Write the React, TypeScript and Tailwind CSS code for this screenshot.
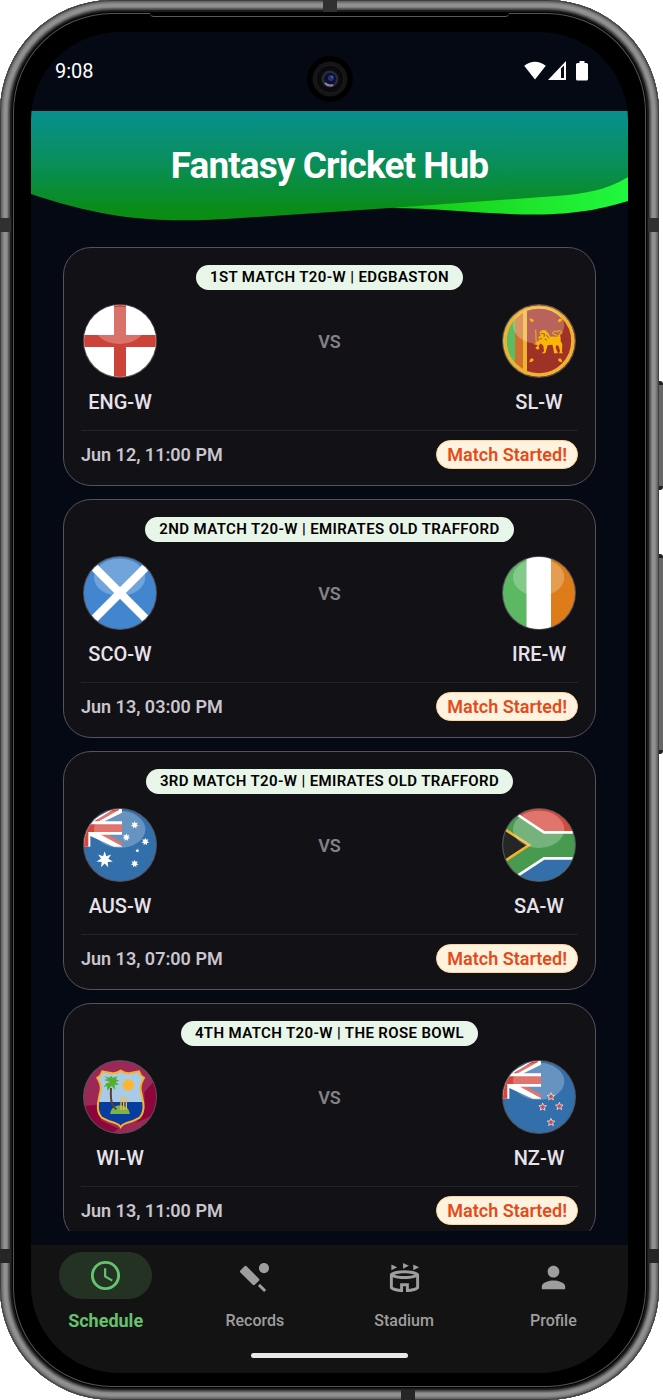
import React from "react";
import {
  MdAccessTime,
  MdOutlineStadium,
  MdPerson,
  MdSportsCricket,
} from "react-icons/md";

type Team = "ENG" | "SL" | "SCO" | "IRE" | "AUS" | "SA" | "WI" | "NZ";

interface Match {
  title: string;
  home: Team;
  away: Team;
  time: string;
}

const matches: Match[] = [
  { title: "1ST MATCH T20-W | EDGBASTON", home: "ENG", away: "SL", time: "Jun 12, 11:00 PM" },
  { title: "2ND MATCH T20-W | EMIRATES OLD TRAFFORD", home: "SCO", away: "IRE", time: "Jun 13, 03:00 PM" },
  { title: "3RD MATCH T20-W | EMIRATES OLD TRAFFORD", home: "AUS", away: "SA", time: "Jun 13, 07:00 PM" },
  { title: "4TH MATCH T20-W | THE ROSE BOWL", home: "WI", away: "NZ", time: "Jun 13, 11:00 PM" },
];

function starPoints(cx: number, cy: number, r: number, n: number, inner: number) {
  const pts: string[] = [];
  for (let i = 0; i < n * 2; i++) {
    const a = (Math.PI * i) / n - Math.PI / 2;
    const rad = i % 2 ? r * inner : r;
    pts.push(`${(cx + rad * Math.cos(a)).toFixed(1)},${(cy + rad * Math.sin(a)).toFixed(1)}`);
  }
  return pts.join(" ");
}

function UnionCanton() {
  return (
    <g>
      <path d="M0 0H117V116H0Z" fill="#336fab" />
      <path d="M16 42 92 0H117V14L60 42ZM16 78H60L117 106V116H92L22 84Z" fill="#fff" />
      <path d="M44 42 108 6V0H98L30 42ZM50 78H72L117 104V115Z" fill="#d6473c" />
      <path d="M0 40H117V80H22V116H0Z" fill="#fff" />
      <path d="M4 0H22V48H4Z" fill="#fff" />
      <path d="M0 20H16V49H117V72H16V116H0Z" fill="#d6473c" />
    </g>
  );
}

function FlagArt({ team }: { team: Team }) {
  switch (team) {
    case "ENG":
      return (
        <g>
          <path d="M0 0H222V222H0Z" fill="#fff" />
          <path d="M93 0H129V93H222V129H129V222H93V129H0V93H93Z" fill="#cc4439" />
        </g>
      );
    case "SL":
      return (
        <g>
          <path d="M0 0H222V222H0Z" fill="#a03127" />
          <path d="M0 0H39V222H0Z" fill="#5cbb63" />
          <path d="M39 0H63V222H39Z" fill="#d0702c" />
          <path d="M63 0H75V222H63Z" fill="#eeb42f" />
          <circle cx="111" cy="111" r="102" fill="none" stroke="#eeb42f" strokeWidth="11" />
        </g>
      );
    case "SCO":
      return (
        <g>
          <path d="M0 0H222V222H0Z" fill="#4186cf" />
          <path d="M32 32 190 190M190 32 32 190" stroke="#fff" strokeWidth="25" />
        </g>
      );
    case "IRE":
      return (
        <g>
          <path d="M0 0H74V222H0Z" fill="#5cb963" />
          <path d="M74 0H147V222H74Z" fill="#fff" />
          <path d="M147 0H222V222H147Z" fill="#dd7c18" />
        </g>
      );
    case "AUS":
    case "NZ":
      return (
        <g>
          <path d="M0 0H222V222H0Z" fill="#336fab" />
          <UnionCanton />
        </g>
      );
    case "SA":
      return (
        <g>
          <path d="M0 0H222V222H0Z" fill="#489a50" />
          <path d="M20 0 126 73H222V0Z" fill="#d6473c" />
          <path d="M20 222 126 151H222V222Z" fill="#336fab" />
          <path d="M30 9 126 73H222M30 214 126 151H222" fill="none" stroke="#fff" strokeWidth="8" />
          <path d="M-2 57 81 111 -2 166Z" fill="#262626" stroke="#eeb42f" strokeWidth="8" />
        </g>
      );
    case "WI":
      return (
        <g>
          <path d="M0 0H222V222H0Z" fill="#9b2857" />
          <path d="M0 138 44 134 56 182 106 206 84 222H0ZM184 97 214 62H222V160L160 188 176 168 186 144Z" fill="#8d063b" />
          <path
            d="M113 32Q100 42 84 39L58 34Q54 48 43 54 55 72 53 90 48 110 45 130 42 158 56 173 78 185 98 190 108 193 113 201 118 193 128 190 150 185 170 173 184 158 181 130 178 110 173 90 171 72 183 54 172 48 168 34L142 39Q126 42 113 32Z"
            fill="#a8cce7"
          />
          <path d="M46 126H181Q184 158 170 173 150 185 128 190 118 193 113 201 108 193 98 190 78 185 56 173 42 158 46 126Z" fill="#063d9e" />
          <circle cx="136" cy="75" r="17" fill="#fbb72e" />
          <path d="M81 162Q84 138 111 136 138 138 141 162Z" fill="#79b54a" />
          <path d="M84 84Q82 120 88 132 92 142 100 148" fill="none" stroke="#5f3c2c" strokeWidth="6" />
          <path d="M82 66 63 60 74 57 64 49 80 53 83 47 90 53 103 49 99 58 109 62 98 66 108 75 95 74 97 90 86 78 73 92 72 78 62 82 70 70Z" fill="#55ad31" />
          <path d="M114 112V150M122 110V150M130 112V150" stroke="#f3b83c" strokeWidth="4" />
          <path
            d="M113 32Q100 42 84 39L58 34Q54 48 43 54 55 72 53 90 48 110 45 130 42 158 56 173 78 185 98 190 108 193 113 201 118 193 128 190 150 185 170 173 184 158 181 130 178 110 173 90 171 72 183 54 172 48 168 34L142 39Q126 42 113 32Z"
            fill="none"
            stroke="#f6b22c"
            strokeWidth="6"
          />
        </g>
      );
  }
}

function FlagEmblem({ team }: { team: Team }) {
  if (team === "AUS") {
    return (
      <g fill="#fff">
        <polygon points={starPoints(65, 155, 25, 7, 0.45)} />
        <polygon points={starPoints(155, 51, 12, 7, 0.5)} />
        <polygon points={starPoints(130, 88, 12, 7, 0.5)} />
        <polygon points={starPoints(187, 101, 12, 7, 0.5)} />
        <polygon points={starPoints(155, 167, 12, 7, 0.5)} />
        <polygon points={starPoints(163, 128, 6, 5, 0.5)} />
      </g>
    );
  }
  if (team === "NZ") {
    return (
      <g fill="#d6473c" stroke="#fff" strokeWidth="2">
        <polygon points={starPoints(147, 110, 12, 5, 0.45)} />
        <polygon points={starPoints(122, 141, 12, 5, 0.45)} />
        <polygon points={starPoints(172, 139, 12, 5, 0.45)} />
        <polygon points={starPoints(147, 187, 12, 5, 0.45)} />
      </g>
    );
  }
  if (team === "ENG") {
    return <path d="M0 0H93V93H0ZM129 0H222V93H129Z" fill="#fff" />;
  }
  if (team === "IRE") {
    return <path d="M74 0H147V222H74Z" fill="#fff" />;
  }
  if (team === "SL") {
    return (
      <g>
        <g fill="#fbb40a">
          <path d="M82 44Q92 43 95 49 96 55 90 55 84 53 82 44ZM181 44Q171 43 168 49 167 55 173 55 179 53 181 44ZM82 175Q83 165 89 163 95 163 95 169 92 175 82 175ZM181 175Q180 165 174 163 168 163 168 169 171 175 181 175Z" />
          <path d="M113 84Q119 75 131 79L139 88 145 98Q157 96 166 99 171 96 169 91L174 93 176 101 176 112 181 120 180 143 183 148H171L174 141 170 126 163 123 161 132 168 148H156L154 133 151 122 137 124 130 148H119L126 142 124 125 116 118 110 126 112 134 106 137 100 131 107 125 103 116 111 108 109 98 116 96Z" />
        </g>
        <path d="M169 98Q160 92 152 88 156 79 164 83 174 77 179 84 180 91 170 90" stroke="#d9a324" strokeWidth="4" fill="none" />
        <path d="M101 77 103 123M96 120H110" stroke="#fbb40a" strokeWidth="3" fill="none" />
        <path d="M118 88 128 90 126 98M133 93 141 103M112 106 120 103M128 105 135 108" stroke="#7a6a30" strokeWidth="3" fill="none" />
      </g>
    );
  }
  return null;
}

function Flag({ team }: { team: Team }) {
  return (
    <div className="size-[74px] rounded-full bg-[#56525b] p-px">
      <svg viewBox="3 3 216 216" className="size-full overflow-hidden rounded-full" role="img" aria-label={team}>
        <FlagArt team={team} />
        {team !== "WI" && <ellipse cx="110" cy="64" rx="77" ry="56" fill="#fff" opacity="0.25" />}
        <FlagEmblem team={team} />
      </svg>
    </div>
  );
}

function TeamColumn({ team }: { team: Team }) {
  return (
    <div className="flex w-[78px] flex-col items-center gap-3">
      <Flag team={team} />
      <span className="text-[20px] leading-6 font-medium whitespace-nowrap text-[#e8e3ea]">{team}-W</span>
    </div>
  );
}

function MatchCard({ match }: { match: Match }) {
  return (
    <article className="flex flex-col rounded-[28px] border border-[#56525b] bg-[#121116] px-[17px] pt-[17px] pb-4">
      <h2 className="self-center rounded-full bg-[#e8f5e9] px-[14px] text-[15px] leading-[25px] font-semibold tracking-wide whitespace-nowrap text-black">
        {match.title}
      </h2>
      <div className="mt-[14px] flex justify-between">
        <TeamColumn team={match.home} />
        <span className="flex h-[74px] items-center text-[18px] font-semibold text-[#828187]">VS</span>
        <TeamColumn team={match.away} />
      </div>
      <div className="mt-4 flex items-center justify-between border-t border-[#242328] pt-[9px]">
        <time className="text-[18px] leading-[29px] font-semibold text-[#cac5cd]">{match.time}</time>
        <span className="rounded-full border border-[#ffd699] bg-[#fff3e0] px-[10px] text-[18px] leading-[27px] font-semibold text-[#e64a19]">
          Match Started!
        </span>
      </div>
    </article>
  );
}

const tabs = [
  { label: "Schedule", Icon: MdAccessTime },
  { label: "Records", Icon: MdSportsCricket },
  { label: "Stadium", Icon: MdOutlineStadium },
  { label: "Profile", Icon: MdPerson },
];

function BottomNav() {
  return (
    <footer className="bg-[#131313] pb-[15px]">
      <nav className="flex pt-[7px]">
        {tabs.map(({ label, Icon }, i) => (
          <button key={label} type="button" className="flex flex-1 flex-col items-center gap-2">
            <span
              className={
                i === 0
                  ? "flex h-[47px] w-[93px] items-center justify-center rounded-full bg-[#233223] text-[#66c26e]"
                  : "flex h-[47px] w-[93px] items-center justify-center rounded-full pt-1 text-[#9e9e9e]"
              }
            >
              <Icon className="size-[35px]" />
            </span>
            <span
              className={
                i === 0
                  ? "text-[18px] leading-7 font-bold text-[#66c26e]"
                  : "text-[16px] leading-7 font-medium text-[#9e9e9e]"
              }
            >
              {label}
            </span>
          </button>
        ))}
      </nav>
      <div className="mx-auto mt-[18px] h-[5px] w-[157px] rounded-full bg-[#e8e8ea]" />
    </footer>
  );
}

function StatusBar() {
  return (
    <div className="relative flex h-[79px] items-center justify-between pr-10 pb-[2px] pl-6 text-white">
      <span className="text-[20px]">9:08</span>
      <div className="flex items-center gap-[2px]">
        <svg viewBox="0 0 22 19" className="h-[19px] w-[22px]" fill="#fff" aria-hidden="true">
          <path d="M11 18.5 0.2 4.8Q11-3.4 21.8 4.8Z" />
        </svg>
        <svg viewBox="0 0 18 19" className="h-[19px] w-[18px]" aria-hidden="true">
          <path d="M18 0V19H0Z" fill="#fff" />
          <path d="M13 7.5 16 4.5V17H13Z" fill="#040914" />
        </svg>
        <svg viewBox="0 0 12 20" className="ml-2 h-5 w-3" fill="#fff" aria-hidden="true">
          <path d="M3.5 0H8.5V2H10.5Q12 2 12 3.5V18Q12 19.5 10.5 19.5H1.5Q0 19.5 0 18V3.5Q0 2 1.5 2H3.5Z" />
        </svg>
      </div>
      <svg viewBox="0 0 46 46" className="absolute top-6 left-1/2 size-[46px] -translate-x-1/2" aria-hidden="true">
        <circle cx="23" cy="23" r="23" fill="#000" />
        <circle cx="23" cy="23" r="17.5" fill="#151517" />
        <circle cx="23" cy="23" r="14" fill="#0b0b0d" stroke="#1e1e20" strokeWidth="1" />
        <circle cx="23" cy="23" r="8.5" fill="#262b38" />
        <circle cx="23" cy="23" r="6" fill="#0b1030" />
        <circle cx="24" cy="22" r="3" fill="#27336f" />
        <path d="M18 27Q21 30.5 26 29" stroke="#85858d" strokeWidth="2" fill="none" />
        <circle cx="25" cy="21" r="1" fill="#5964b0" />
      </svg>
    </div>
  );
}

function Header() {
  return (
    <header className="grid h-[110px]">
      <svg viewBox="0 0 597 110" preserveAspectRatio="none" className="col-start-1 row-start-1 h-[110px] w-full" aria-hidden="true">
        <defs>
          <linearGradient id="pitch" x1="0" y1="0" x2="0" y2="1">
            <stop offset="0" stopColor="#08908f" />
            <stop offset="0.5" stopColor="#098e57" />
            <stop offset="0.9" stopColor="#0a8c18" />
            <stop offset="1" stopColor="#0a8c14" />
          </linearGradient>
          <linearGradient id="lime" x1="0" y1="0" x2="1" y2="0">
            <stop offset="0" stopColor="#12c412" />
            <stop offset="0.6" stopColor="#1fe62c" />
            <stop offset="1" stopColor="#20f83e" />
          </linearGradient>
        </defs>
        <path d="M359 97C410 97 455 103.500 505 103.500 545 103.500 575 97 597 90V60L500 80Z" fill="url(#lime)" />
        <path d="M0 0H597V66C575 80 550 83 525 85L359 97 210 107C125 113 75 108 0 83Z" fill="url(#pitch)" />
      </svg>
      <h1 className="col-start-1 row-start-1 self-center justify-self-center text-[37px] leading-[40px] font-bold tracking-tight whitespace-nowrap text-white">
        Fantasy Cricket Hub
      </h1>
    </header>
  );
}

export default function App() {
  return (
    <div className="relative h-screen min-h-[720px] bg-white pr-1 font-['Roboto',sans-serif]">
      <div className="absolute top-[381px] right-0 h-[109px] w-2 rounded-r-[3px] border-y-4 border-[#222] bg-[#666]" />
      <div className="absolute top-[554px] right-0 h-[200px] w-2 rounded-r-[3px] border-y-4 border-[#222] bg-[#666]" />
      <div className="relative h-full overflow-hidden rounded-[112px] bg-black px-[31px] pt-8 pb-[27px] shadow-[inset_0_0_1px_1px_#3a3a3a,inset_0_0_2px_3px_#6a6a6a,inset_0_0_2px_8px_#929292,inset_0_0_1px_10px_#4c4c4c,inset_0_0_1px_12px_#1c1c1c,inset_0_0_0_13px_#000,inset_0_0_0_14px_#555]">
        <div className="absolute top-0 left-1/2 h-3 w-[14px] -translate-x-1/2 bg-[#303030]" />
        <div className="absolute bottom-0 left-[401px] h-[10px] w-[14px] bg-[#262626]" />
        <div className="absolute top-[218px] left-0 h-[14px] w-[11px] bg-[#303030]" />
        <div className="absolute top-[218px] right-0 h-[14px] w-[11px] bg-[#303030]" />
        <div className="absolute bottom-[137px] left-0 h-[14px] w-[11px] bg-[#262626]" />
        <div className="absolute right-0 bottom-[137px] h-[14px] w-[11px] bg-[#262626]" />
        <div className="absolute inset-x-[150px] top-[13px] h-[4px] rounded-b-[4px] border-b border-[#5a5a5a] bg-black" />
        <div className="flex h-full flex-col overflow-hidden rounded-[88px] bg-[#040914]">
          <StatusBar />
          <Header />
          <main className="mt-6 mb-[14px] flex min-h-0 flex-1 flex-col gap-[13px] overflow-y-auto px-8 pt-[2px] [scrollbar-width:none] *:shrink-0">
            {matches.map((m) => (
              <MatchCard key={m.title} match={m} />
            ))}
          </main>
          <BottomNav />
        </div>
      </div>
    </div>
  );
}
